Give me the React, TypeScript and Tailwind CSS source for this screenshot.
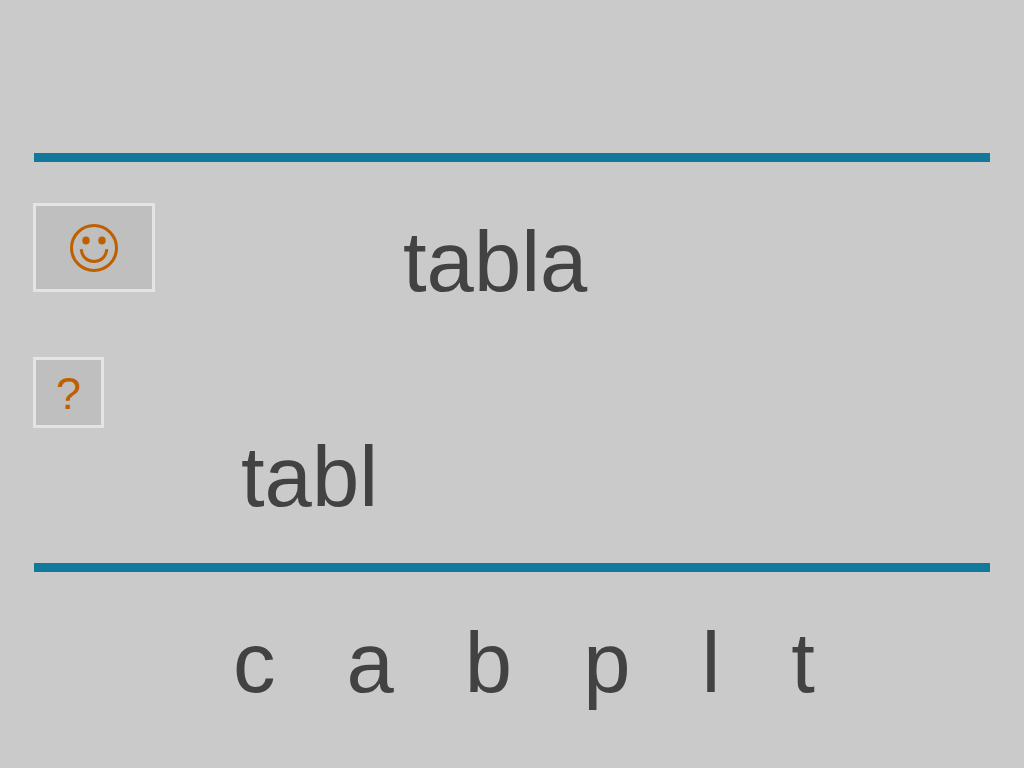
import type { ReactNode } from 'react';

const letters = ['c', 'a', 'b', 'p', 'l', 't'];

function Divider() {
  return <hr className="mx-px h-[9px] border-0 bg-[#12789c]" />;
}

function ToolButton({ label, className, children }: { label: string; className: string; children: ReactNode }) {
  return (
    <button
      type="button"
      aria-label={label}
      className={`flex items-center justify-center border-3 border-[#e4e4e4] bg-[#bfbfbf] text-[#bf6000] ${className}`}
    >
      {children}
    </button>
  );
}

function Smiley() {
  return (
    <svg viewBox="0 0 48 48" className="size-12" fill="none" stroke="currentColor" aria-hidden="true">
      <circle cx="24" cy="24" r="22.5" strokeWidth="3" />
      <ellipse cx="16" cy="16.5" rx="3.7" ry="4" fill="currentColor" stroke="none" />
      <ellipse cx="32" cy="16.5" rx="3.7" ry="4" fill="currentColor" stroke="none" />
      <path d="M11.2 25.2C11.8 32.6 17 37.5 24 37.5S36.2 32.6 36.8 25.2" strokeWidth="3" />
    </svg>
  );
}

export default function App() {
  return (
    <main className="min-h-screen bg-[#cacaca] px-[33px] pt-[153px] font-['Liberation_Sans',Arial,sans-serif] text-[85px] leading-[86px] text-[#424242]">
      <Divider />

      <section className="flex pt-[41px] pb-[43px]">
        <div className="flex w-[208px] flex-col items-start gap-[65px]">
          <ToolButton label="Smiley" className="h-[89px] w-[122px]">
            <Smiley />
          </ToolButton>
          <ToolButton label="Help" className="size-[71px] pt-0.5 text-[45px] leading-[48px]">
            ?
          </ToolButton>
        </div>

        {/* target word above, typed letters below */}
        <div className="flex flex-1 flex-col gap-[129px] pt-4">
          <p className="pl-[162px]">tabla</p>
          <p>tabl</p>
        </div>
      </section>

      <Divider />

      <div className="flex justify-center gap-[71px] pt-[48px] pl-6">
        {letters.map((letter) => (
          <button key={letter} type="button">
            {letter}
          </button>
        ))}
      </div>
    </main>
  );
}
